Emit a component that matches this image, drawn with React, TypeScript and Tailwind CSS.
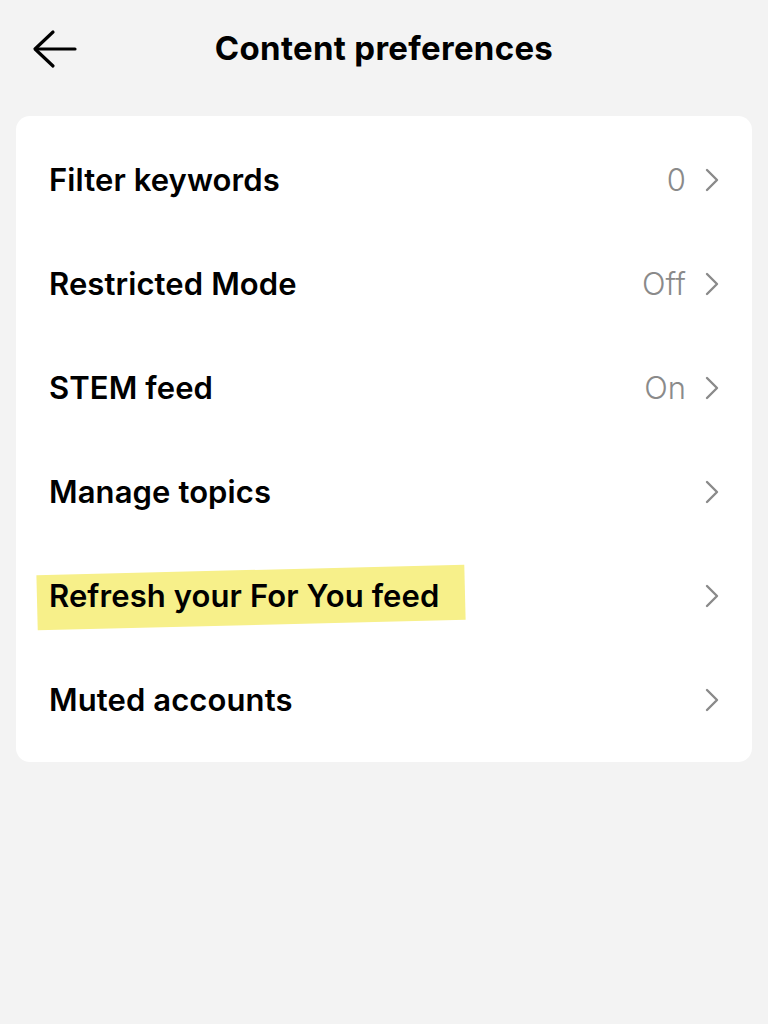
const ROWS = [
  { label: 'Filter keywords', value: '0' },
  { label: 'Restricted Mode', value: 'Off' },
  { label: 'STEM feed', value: 'On' },
  { label: 'Manage topics', value: '' },
  { label: 'Refresh your For You feed', value: '', highlight: true },
  { label: 'Muted accounts', value: '' },
];

function BackArrow() {
  return (
    <svg width="46" height="40" viewBox="0 0 46 40" fill="none" className="block">
      <path d="M21 3 L3 20 L21 37" stroke="#000" strokeWidth="3.2" strokeLinecap="round" strokeLinejoin="round" />
      <path d="M4 20 H43" stroke="#000" strokeWidth="3.2" strokeLinecap="round" />
    </svg>
  );
}

function Chevron() {
  return (
    <svg width="16" height="26" viewBox="0 0 16 26" fill="none" className="block">
      <path d="M3 3 L13 13 L3 23" stroke="#8a8a8a" strokeWidth="2.4" strokeLinecap="round" strokeLinejoin="round" />
    </svg>
  );
}

export default function App() {
  return (
    <div className="min-h-[1024px] w-full bg-[#f3f3f3] font-['Inter',sans-serif] text-black">
      {/* header */}
      <div className="h-[98px] flex items-center px-[32px]">
        <div className="w-[60px]">
          <BackArrow />
        </div>
        <h1 className="flex-1 text-center text-[33px] font-bold tracking-[0.3px] pr-[60px]">Content preferences</h1>
      </div>

      {/* card */}
      <div className="mx-[16px] mt-[18px] bg-white rounded-[14px] py-[11px]">
        {ROWS.map(row => (
          <div key={row.label} className="h-[104px] flex items-center pl-[33px] pr-[32px] pt-[2px]">
            <div className="flex-1">
              {row.highlight ? (
                <span className="relative inline-block">
                  <span className="absolute -left-[12px] -right-[26px] -top-[3px] -bottom-[5px] bg-[#f7f08a] -rotate-[1.4deg]" />
                  <span className="relative text-[31px] font-semibold tracking-[0.1px]">{row.label}</span>
                </span>
              ) : (
                <span className="text-[31px] font-semibold tracking-[0.1px]">{row.label}</span>
              )}
            </div>
            {row.value && (
              <span className="text-[31px] font-light text-[#8a8a8a] mr-[18px]">{row.value}</span>
            )}
            <Chevron />
          </div>
        ))}
      </div>
    </div>
  );
}
